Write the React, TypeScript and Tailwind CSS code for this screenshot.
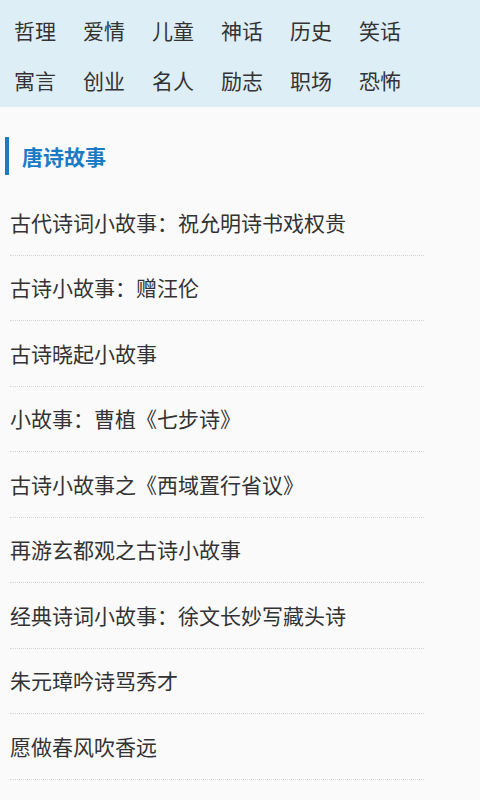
const categories = [
  ["哲理", "爱情", "儿童", "神话", "历史", "笑话"],
  ["寓言", "创业", "名人", "励志", "职场", "恐怖"],
];

const stories = [
  "古代诗词小故事：祝允明诗书戏权贵",
  "古诗小故事：赠汪伦",
  "古诗晓起小故事",
  "小故事：曹植《七步诗》",
  "古诗小故事之《西域置行省议》",
  "再游玄都观之古诗小故事",
  "经典诗词小故事：徐文长妙写藏头诗",
  "朱元璋吟诗骂秀才",
  "愿做春风吹香远",
  "心京明散令判诗",
];

export default function App() {
  return (
    <div
      className="w-[480px] h-[800px] overflow-hidden bg-[#fafafa] text-[#333333]"
      style={{ fontFamily: '"Noto Sans CJK SC", "Noto Sans", sans-serif' }}
    >
      {/* Category nav */}
      <div className="h-[107px] bg-[#deeef7] pt-[5px] pl-[14px]">
        {categories.map((row, i) => (
          <div key={i} className="flex h-[50px] items-center">
            {row.map((c) => (
              <span key={c} className="w-[69px] text-[21px] leading-none">
                {c}
              </span>
            ))}
          </div>
        ))}
      </div>

      {/* Section title */}
      <div className="mt-[30px] flex h-[38px] items-center pl-[5px]">
        <div className="h-[38px] w-[4px] bg-[#1a7bc4]"></div>
        <h2 className="ml-[13px] text-[21px] font-bold leading-none text-[#1a7bc4]">唐诗故事</h2>
      </div>

      {/* Story list */}
      <ul className="mt-[15px] pl-[10px] pr-[56px]">
        {stories.map((s) => (
          <li
            key={s}
            className="flex h-[65.5px] items-center border-b border-dotted border-[#d6d6d6] text-[21px] leading-none"
          >
            {s}
          </li>
        ))}
      </ul>
    </div>
  );
}
